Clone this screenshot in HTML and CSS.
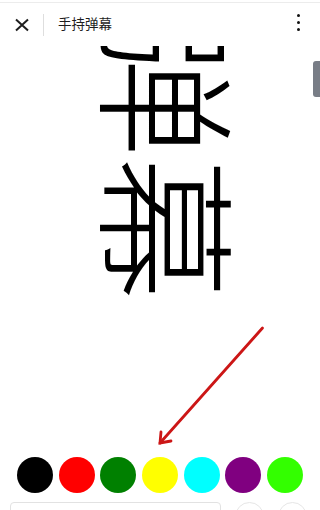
FILE: index.html
```html
<!DOCTYPE html>
<html lang="zh">
<head>
<meta charset="utf-8">
<link rel="stylesheet" href="styles.css">
</head>
<body>
<div class="app">
  <header class="topbar">
    <div class="close" aria-label="关闭">
      <svg width="16" height="16" viewBox="0 0 16 16"><path d="M2 2.5 L14 13.5 M14 2.5 L2 13.5" stroke="#1e1e1e" stroke-width="2" fill="none" stroke-linecap="butt"/></svg>
    </div>
    <div class="sep"></div>
    <div class="title">手持弹幕</div>
    <div class="more"><span></span><span></span><span></span></div>
  </header>
  <main class="stage">
    <div class="danmu">弹幕</div>
    <div class="thumb"></div>
  </main>
  <div class="palette">
    <span class="dot c-black"></span>
    <span class="dot c-red"></span>
    <span class="dot c-green"></span>
    <span class="dot c-yellow"></span>
    <span class="dot c-cyan"></span>
    <span class="dot c-purple"></span>
    <span class="dot c-lime"></span>
  </div>
  <div class="inputbar">
    <div class="field"></div>
    <div class="btn"></div>
    <div class="btn"></div>
  </div>
  <svg class="arrow" width="320" height="510" viewBox="0 0 320 510">
    <path d="M262.5 328 L160 443" stroke="#cc1616" stroke-width="2.8" fill="none" stroke-linecap="round"/>
    <path d="M161 432 L160 443 L171 441" stroke="#cc1616" stroke-width="2.8" fill="none" stroke-linecap="round" stroke-linejoin="miter"/>
  </svg>
</div>
</body>
</html>
```
FILE: styles.css
```css
* { box-sizing: border-box; }
html, body { margin: 0; padding: 0; background: #fff; }
body {
  width: 320px;
  height: 510px;
  overflow: hidden;
  font-family: "Noto Sans CJK SC", "Noto Sans", sans-serif;
}
.app {
  position: relative;
  width: 320px;
  height: 510px;
  display: flex;
  flex-direction: column;
}
.topbar {
  height: 44px;
  flex: none;
  display: flex;
  align-items: center;
  padding: 0 0 0 14px;
  margin-top: 2px;
  border-top: 1px solid #ececec;
  background: #fff;
  position: relative;
  z-index: 2;
}
.close {
  width: 16px;
  height: 16px;
  display: flex;
}
.sep {
  width: 1px;
  height: 22px;
  background: #dedede;
  margin-left: 13px;
}
.title {
  margin-left: 14px;
  font-size: 13.5px;
  color: #1e1e1e;
  line-height: 1;
  margin-top: -1px;
}
.more {
  margin-left: auto;
  margin-right: 20px;
  display: flex;
  flex-direction: column;
  gap: 4px;
  margin-top: -4px;
}
.more span {
  width: 3px;
  height: 3px;
  background: #111;
  border-radius: 50%;
}
.stage {
  height: 411px;
  flex: none;
  overflow: hidden;
  position: relative;
  display: flex;
  justify-content: center;
}
.danmu {
  writing-mode: vertical-rl;
  text-orientation: sideways;
  font-size: 143px;
  font-weight: 300;
  line-height: 1;
  color: #000;
  margin-top: -32px;
  margin-left: 26px;
}
.thumb {
  position: absolute;
  right: 0;
  top: 15px;
  width: 7px;
  height: 36px;
  background: #787d86;
  border-radius: 3px 0 0 3px;
}
.palette {
  flex: none;
  display: flex;
  justify-content: space-between;
  padding: 0 17px;
  height: 36px;
}
.dot {
  width: 36px;
  height: 36px;
  border-radius: 50%;
}
.c-black { background: #000; }
.c-red { background: #ff0000; }
.c-green { background: #008000; }
.c-yellow { background: #ffff00; }
.c-cyan { background: #00ffff; }
.c-purple { background: #800080; }
.c-lime { background: #33ff00; }
.inputbar {
  flex: none;
  display: flex;
  align-items: flex-start;
  margin-top: 9px;
  padding: 0 13px 0 10px;
  gap: 14px;
}
.field {
  width: 211px;
  height: 34px;
  border: 1px solid #e2e2e2;
  border-radius: 4px;
}
.btn {
  width: 29px;
  height: 29px;
  border: 1px solid #e6e6e6;
  border-radius: 50%;
}
.arrow {
  position: absolute;
  left: 0;
  top: 0;
  pointer-events: none;
}
```
